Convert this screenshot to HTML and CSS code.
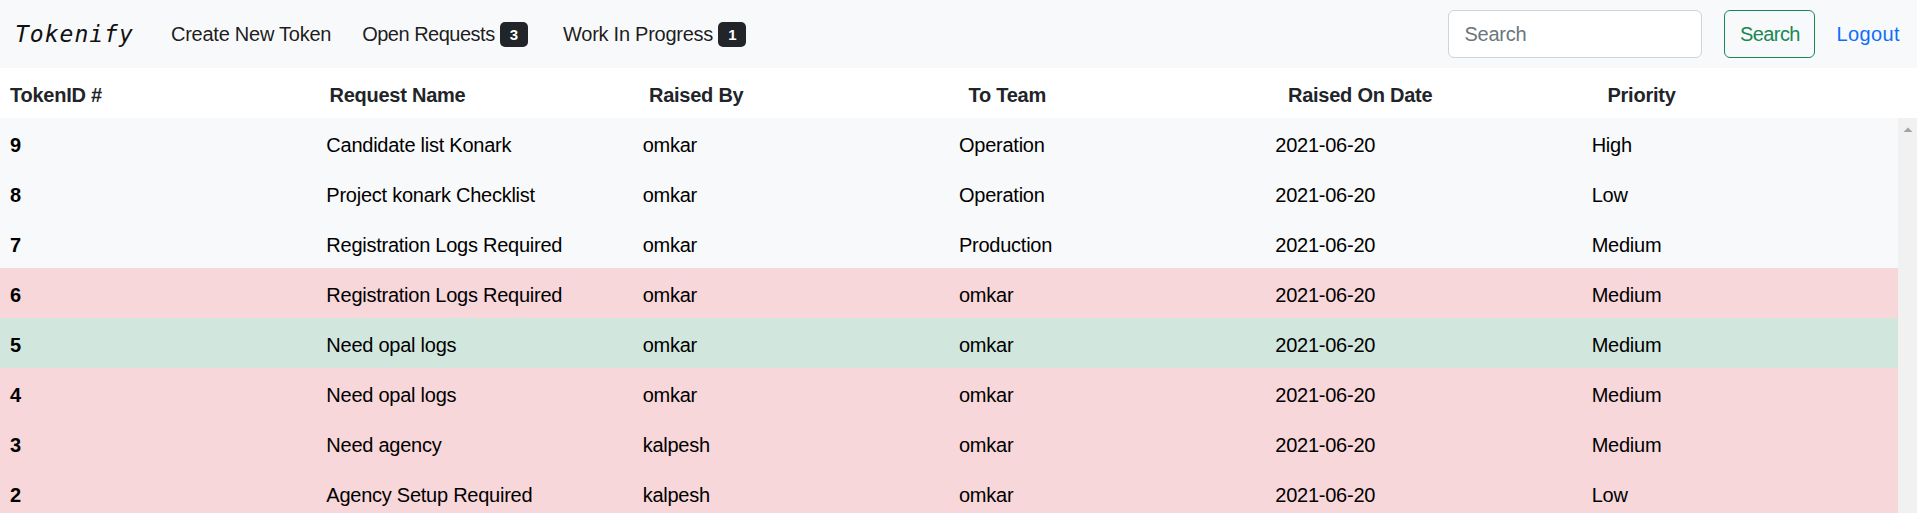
FILE: index.html
```html
<!DOCTYPE html>
<html lang="en">
<head>
<meta charset="utf-8">
<title>Tokenify</title>
<link rel="stylesheet" href="styles.css">
</head>
<body>
<nav class="navbar">
  <a class="brand" href="#">Tokenify</a>
  <ul class="nav">
    <li><a class="nav-link" href="#">Create New Token</a></li>
    <li><a class="nav-link" href="#"><span class="tight">Open Requests</span> <span class="badge">3</span></a></li>
    <li class="nav-last"><a class="nav-link" href="#">Work In Progress <span class="badge">1</span></a></li>
  </ul>
  <form class="search-form">
    <input class="search-input" type="search" placeholder="Search">
    <button class="btn-search" type="button">Search</button>
  </form>
  <a class="logout" href="#">Logout</a>
</nav>

<div class="table">
  <div class="thead">
    <div class="th">TokenID #</div>
    <div class="th">Request Name</div>
    <div class="th">Raised By</div>
    <div class="th">To Team</div>
    <div class="th">Raised On Date</div>
    <div class="th">Priority</div>
  </div>
  <div class="tbody">
    <div class="rows">
      <div class="tr light"><div class="td id">9</div><div class="td">Candidate list Konark</div><div class="td">omkar</div><div class="td">Operation</div><div class="td">2021-06-20</div><div class="td">High</div></div>
      <div class="tr light"><div class="td id">8</div><div class="td">Project konark Checklist</div><div class="td">omkar</div><div class="td">Operation</div><div class="td">2021-06-20</div><div class="td">Low</div></div>
      <div class="tr light"><div class="td id">7</div><div class="td">Registration Logs Required</div><div class="td">omkar</div><div class="td">Production</div><div class="td">2021-06-20</div><div class="td">Medium</div></div>
      <div class="tr danger"><div class="td id">6</div><div class="td">Registration Logs Required</div><div class="td">omkar</div><div class="td">omkar</div><div class="td">2021-06-20</div><div class="td">Medium</div></div>
      <div class="tr success"><div class="td id">5</div><div class="td">Need opal logs</div><div class="td">omkar</div><div class="td">omkar</div><div class="td">2021-06-20</div><div class="td">Medium</div></div>
      <div class="tr danger"><div class="td id">4</div><div class="td">Need opal logs</div><div class="td">omkar</div><div class="td">omkar</div><div class="td">2021-06-20</div><div class="td">Medium</div></div>
      <div class="tr danger"><div class="td id">3</div><div class="td">Need agency</div><div class="td">kalpesh</div><div class="td">omkar</div><div class="td">2021-06-20</div><div class="td">Medium</div></div>
      <div class="tr danger"><div class="td id">2</div><div class="td">Agency Setup Required</div><div class="td">kalpesh</div><div class="td">omkar</div><div class="td">2021-06-20</div><div class="td">Low</div></div>
    </div>
    <div class="scrollbar" aria-hidden="true">
      <svg class="scroll-up" width="19" height="19" viewBox="0 0 19 19"><polygon points="5.5,14 14.5,14 10,9.5" fill="#a3a3a3"/></svg>
    </div>
  </div>
</div>
</body>
</html>
```

FILE: styles.css
```css
html {
  overflow: hidden;
}
body {
  margin: 0;
  font-family: "Liberation Sans", Arial, sans-serif;
  font-size: 20px;
  line-height: 1.5;
  color: #212529;
  background: #fff;
  letter-spacing: -0.25px;
}
a {
  text-decoration: none;
}

/* navbar */
.navbar {
  display: flex;
  align-items: center;
  height: 68px;
  box-sizing: border-box;
  padding: 0 15px;
  background: #f8f9fa;
}
.brand {
  font-family: "DejaVu Sans Mono", "Liberation Mono", monospace;
  font-style: italic;
  font-size: 23px;
  letter-spacing: 1px;
  color: #111;
  width: 146px;
  padding-top: 1px;
}
.nav {
  display: flex;
  list-style: none;
  margin: 0;
  padding: 0;
  gap: 11px;
}
.nav-last {
  margin-left: 4px;
}
.nav-link {
  display: flex;
  align-items: center;
  padding: 8px 10px;
  color: rgba(0, 0, 0, 0.9);
}
.tight {
  letter-spacing: -0.5px;
}
.badge {
  display: inline-block;
  margin-left: 5px;
  padding: 0 10px;
  height: 25px;
  line-height: 25px;
  font-size: 15px;
  font-weight: 700;
  color: #fff;
  background: #212529;
  border-radius: 5px;
  letter-spacing: 0;
}
.search-form {
  display: flex;
  margin-left: auto;
  gap: 22px;
}
.search-input {
  width: 254px;
  height: 48px;
  box-sizing: border-box;
  padding: 0 15px;
  border: 1px solid #ced4da;
  border-radius: 6px;
  background: #fff;
  font-family: inherit;
  font-size: 20px;
  letter-spacing: -0.25px;
  color: #212529;
  outline: none;
}
.search-input::placeholder {
  color: #6c757d;
}
.btn-search {
  width: 91px;
  height: 48px;
  padding: 0;
  border: 1px solid #198754;
  border-radius: 6px;
  background: transparent;
  color: #198754;
  font-family: inherit;
  font-size: 20px;
  letter-spacing: -0.6px;
}
.logout {
  margin-left: 21px;
  margin-right: 2px;
  color: #0d6efd;
  letter-spacing: 0.4px;
}

/* table */
.thead {
  display: grid;
  grid-template-columns: repeat(6, 1fr);
  background: #fff;
}
.th {
  padding: 12px 10px 8px;
  font-weight: 700;
  color: #212529;
}
.tbody {
  display: flex;
  height: 460px;
}
.rows {
  flex: 1;
}
.tr {
  display: grid;
  grid-template-columns: repeat(6, 1fr);
  color: #000;
}
.td {
  padding: 12px 10px 8px;
  white-space: nowrap;
}
.td.id {
  font-weight: 700;
}
.tr.light { background: #f8f9fa; }
.tr.danger { background: #f8d7da; }
.tr.success { background: #d1e7dd; }

.scrollbar {
  width: 19px;
  flex: none;
  background: #f1f1f1;
}
.scroll-up {
  display: block;
}
```
